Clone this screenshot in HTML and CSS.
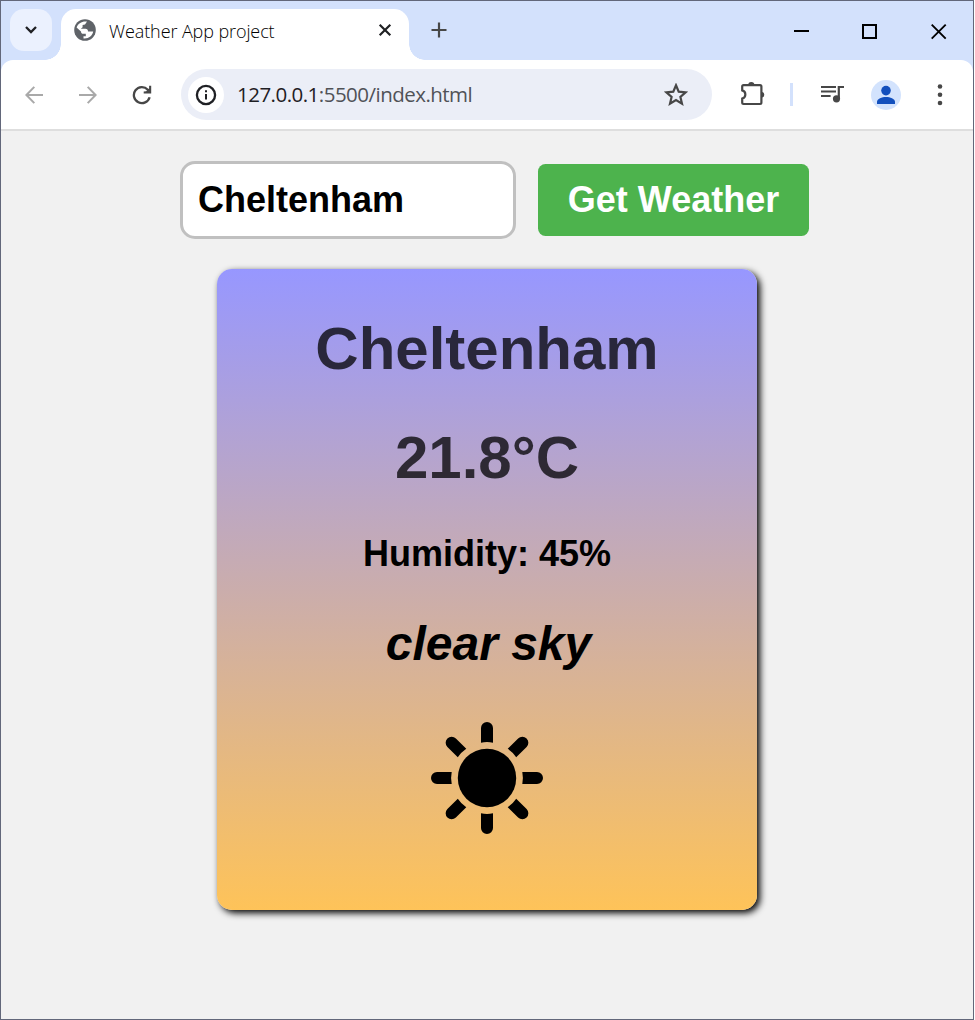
FILE: index.html
```html
<!DOCTYPE html>
<html lang="en">
<head>
<meta charset="utf-8">
<title>Weather App project</title>
<link rel="stylesheet" href="styles.css">
</head>
<body>
<div class="window">
  <header class="tabstrip">
    <div class="tab-search"><svg width="14" height="10" viewBox="0 0 14 10"><path d="M2 2l5 5 5-5" fill="none" stroke="#1f2024" stroke-width="2.3"/></svg></div>
    <div class="tab">
      <svg class="globe" width="22" height="22" viewBox="0 0 22 22"><circle cx="11" cy="11" r="10.8" fill="#5f6368"/><path d="M13 2.5L11 5.6 8.6 6.1v2.2L6.8 9.8h4.6c1.8 0 2.6 1 2.6 2.8h5.2C18.4 17 14.6 20 9.5 19.5v-2.3h2.3v-2.4H9.4c-1.6 0-2.4-.8-2.4-2.4L2.6 8.4C4 4.4 8 1.8 13 2.5z" fill="#fff"/></svg>
      <span class="tab-title">Weather App project</span>
      <svg class="tab-close" width="14" height="14" viewBox="0 0 14 14"><path d="M1.7 1.7l10.6 10.6M12.3 1.7L1.7 12.3" stroke="#202124" stroke-width="2.2"/></svg>
    </div>
    <svg class="new-tab" width="16" height="16" viewBox="0 0 16 16"><path d="M8 .5v15M.5 8h15" stroke="#474747" stroke-width="2.2"/></svg>
    <div class="controls">
      <svg width="16" height="16" viewBox="0 0 16 16" shape-rendering="crispEdges"><path d="M1 7h15" stroke="#000" stroke-width="2"/></svg>
      <svg width="16" height="16" viewBox="0 0 16 16" shape-rendering="crispEdges"><path d="M1 1h13v13H1z" fill="none" stroke="#000" stroke-width="2"/></svg>
      <svg width="16" height="16" viewBox="0 0 16 16"><path d="M.7.7l14 14M14.7.7l-14 14" stroke="#000" stroke-width="1.9"/></svg>
    </div>
  </header>
  <nav class="toolbar">
    <svg class="back" width="18" height="18" viewBox="0 0 18 18"><path d="M18 9H1.8M9.3.9L1.4 9l7.9 8.1" fill="none" stroke="#a9a9a9" stroke-width="2"/></svg>
    <svg class="forward" width="18" height="18" viewBox="0 0 18 18"><path d="M0 9h16.2M8.7.9L16.6 9l-7.9 8.1" fill="none" stroke="#a9a9a9" stroke-width="2"/></svg>
    <svg class="reload" width="20" height="20" viewBox="0 0 20 20"><path d="M17.6 12.2A8 8 0 1 1 15.8 4.7L17.6 6.4" fill="none" stroke="#474747" stroke-width="2.3"/><path d="M19.2.8v7.6h-7.5V6.6l2.5-.4 2.9-2.7V.8z" fill="#474747"/></svg>
    <div class="address">
      <span class="site-info"><svg width="22" height="22" viewBox="0 0 22 22"><circle cx="11" cy="11" r="9.1" fill="none" stroke="#1f2024" stroke-width="2.3"/><path d="M11 10v5.4M11 6.2v2" stroke="#1f2024" stroke-width="2"/></svg></span>
      <span class="url"><b>127.0.0.1</b>:5500/index.html</span>
      <svg class="star" width="24" height="23" viewBox="0 0 24 23"><path d="M12 2.3l2.7 6.4 7 .6-5.3 4.6 1.6 6.8-6-3.6-6 3.6 1.6-6.8-5.3-4.6 7-.6z" fill="none" stroke="#474747" stroke-width="2.2"/></svg>
    </div>
    <svg class="puzzle" width="25" height="25" viewBox="0 0 25 25"><path d="M2.2 5.6q0-1.4 1.4-1.4H20q1.4 0 1.4 1.4v16q0 1.4-1.4 1.4H3.6q-1.4 0-1.4-1.4v-4.1c4.2-1.1 4.2-7 0-8.1z" fill="none" stroke="#474747" stroke-width="2.2"/><path d="M8.2 4a3.1 3.1 0 0 1 6.2 0zM21.5 10.9a2.8 2.8 0 0 1 0 5.6z" fill="#474747"/></svg>
    <i class="divider"></i>
    <svg class="music" width="24" height="18" viewBox="0 0 24 18"><path d="M0 2h15M0 6.5h15M0 11h9.6" stroke="#474747" stroke-width="2"/><path d="M17.8 14V2H23" fill="none" stroke="#474747" stroke-width="2.2"/><circle cx="15.5" cy="13.8" r="3.6" fill="#474747"/></svg>
    <span class="profile"><svg width="30" height="30" viewBox="0 0 30 30"><circle cx="15" cy="10.6" r="4.8" fill="#1350bd"/><path d="M6 24v-2.4c0-3 5-4.7 9-4.7s9 1.7 9 4.7V24z" fill="#1350bd"/></svg></span>
    <svg class="dots" width="6" height="22" viewBox="0 0 6 22"><g fill="#474747"><circle cx="3" cy="2.5" r="2.3"/><circle cx="3" cy="10.7" r="2.3"/><circle cx="3" cy="19" r="2.3"/></g></svg>
  </nav>
  <main class="page">
    <form class="search">
      <input class="city-input" type="text" value="Cheltenham">
      <button class="submit" type="button">Get Weather</button>
    </form>
    <section class="card">
      <h1 class="city">Cheltenham</h1>
      <p class="temp">21.8°C</p>
      <p class="humidity">Humidity: 45%</p>
      <p class="description">clear sky</p>
      <svg class="sun" width="112" height="112" viewBox="-56 -56 112 112">
        <defs><path id="ray" d="M-6-35.3V-50a6 6 0 0 1 12 0v14.7Q0-36.5-6-35.3z"/></defs>
        <circle r="29.2"/>
        <use href="#ray"/><use href="#ray" transform="rotate(45)"/><use href="#ray" transform="rotate(90)"/><use href="#ray" transform="rotate(135)"/><use href="#ray" transform="rotate(180)"/><use href="#ray" transform="rotate(225)"/><use href="#ray" transform="rotate(270)"/><use href="#ray" transform="rotate(315)"/>
      </svg>
    </section>
  </main>
</div>
</body>
</html>
```
FILE: styles.css
```css
* { box-sizing: border-box; }
body { margin: 0; overflow: hidden; }
svg { display: block; flex: none; }
.window {
  width: 974px;
  height: 1020px;
  border: 1px solid #62677a;
  background: #f1f1f1;
  display: flex;
  flex-direction: column;
  overflow: hidden;
}
.tabstrip {
  position: relative;
  z-index: 1;
  height: 59px;
  flex: none;
  background: #d3e1fc;
  display: flex;
  align-items: flex-start;
  padding: 8px 0 0 9px;
}
.tab-search {
  width: 42px;
  height: 42px;
  border-radius: 14px;
  background: #ebf1fe;
  display: grid;
  place-items: center;
}
.tab {
  position: relative;
  width: 348px;
  height: 51px;
  margin-left: 9px;
  background: #fff;
  border-radius: 15px 15px 0 0;
  display: flex;
  padding: 10px 0 0 13px;
}
.tab::before, .tab::after {
  content: "";
  position: absolute;
  bottom: 0;
  width: 16px;
  height: 16px;
}
.tab::before { left: -16px; background: radial-gradient(circle at 0 0, transparent 15.5px, #fff 16px); }
.tab::after { right: -16px; background: radial-gradient(circle at 100% 0, transparent 15.5px, #fff 16px); }
.tab-title {
  width: 170px;
  margin-left: 13px;
  font: 300 18px/24px "Open Sans", "Noto Sans", sans-serif;
  letter-spacing: -0.1px;
  color: #000;
  white-space: nowrap;
}
.tab-close { margin: 4px 0 0 99px; }
.new-tab { margin: 13px 0 0 22px; }
.controls { display: flex; gap: 53px; margin: 15px 0 0 auto; padding-right: 26px; }
.toolbar {
  height: 71px;
  flex: none;
  background: #fff;
  border-bottom: 2px solid #dedede;
  border-radius: 12px 12px 0 0;
  box-shadow: 0 -12px 0 #d3e1fc;
  display: flex;
  align-items: center;
  padding-left: 24px;
}
.forward { margin-left: 36px; }
.reload { margin-left: 35px; }
.address {
  width: 531px;
  height: 51px;
  margin-left: 29px;
  border-radius: 26px;
  background: #ebeef7;
  display: flex;
  align-items: center;
  padding-left: 7px;
}
.site-info {
  width: 36px;
  height: 36px;
  border-radius: 50%;
  background: #fff;
  display: grid;
  place-items: center;
}
.url {
  width: 250px;
  margin-left: 13px;
  padding-bottom: 2px;
  font: 20.5px/30px "Open Sans", "Noto Sans", sans-serif;
  letter-spacing: -0.52px;
  color: #505257;
  white-space: nowrap;
}
.url b { font-weight: 400; color: #1f2024; }
.star { margin-left: 177px; }
.puzzle { margin: -3px 0 0 28px; }
.divider { width: 3px; height: 23px; margin-left: 25px; background: #d3e1fc; }
.music { margin: -2px 0 0 28px; }
.profile { margin-left: 26px; border-radius: 50%; background: #d3e3fd; }
.dots { margin-left: 36px; }
.page {
  flex: 1;
  display: flex;
  flex-direction: column;
  align-items: center;
  font-family: Arial, "Liberation Sans", sans-serif;
  font-weight: 700;
  padding-top: 30px;
}
.search { display: flex; align-items: center; gap: 22px; padding-left: 15px; }
.city-input {
  width: 336px;
  height: 78px;
  border: 3px solid #c0c0c0;
  border-radius: 15px;
  padding: 0 15px;
  font: inherit;
  font-size: 36px;
  color: #000;
  background: #fff;
}
.submit {
  width: 271px;
  height: 72px;
  padding: 0;
  border: 0;
  border-radius: 7.5px;
  background: #4db34d;
  color: #fff;
  font: inherit;
  font-size: 36px;
}
.card {
  width: 540px;
  height: 641px;
  margin-top: 30px;
  border-radius: 15px;
  background: linear-gradient(180deg, #9797ff, #fec359);
  box-shadow: 3px 3px 7.5px #000;
  display: flex;
  flex-direction: column;
  align-items: center;
  padding-top: 45px;
}
.city, .temp { margin: 0; font-size: 60px; line-height: 69px; color: rgba(0, 0, 0, 0.75); }
.temp { margin-top: 40px; }
.humidity { margin: 41px 0 0; font-size: 36px; line-height: 41px; }
.description { margin: 42px 0 0; padding-left: 3px; font-size: 48px; line-height: 55px; font-style: italic; }
.sun { margin-top: 51px; }
```
